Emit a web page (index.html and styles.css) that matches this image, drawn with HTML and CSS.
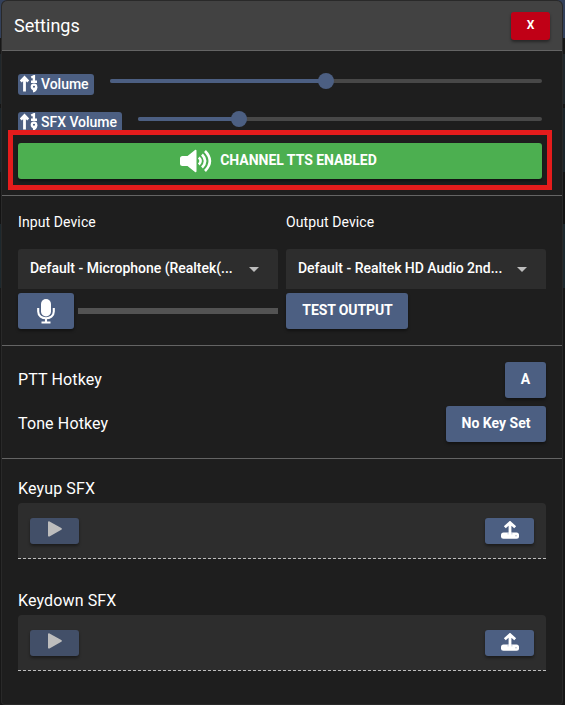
FILE: index.html
```html
<!DOCTYPE html>
<html lang="en">
<head>
<meta charset="utf-8">
<title>Settings</title>
<link rel="stylesheet" href="styles.css">
</head>
<body>
<svg class="defs" aria-hidden="true">
  <symbol id="levels" viewBox="0 0 18 18">
    <path d="M4.500 16.500V3M.8 6.500 4.500 2.500 8.200 6.500" fill="none" stroke="#fff" stroke-width="2.800"/>
    <path d="M11.200 2.500 13.900 1.300V6.500M11 6.800h6" fill="none" stroke="#fff" stroke-width="2.400"/>
    <circle cx="14" cy="11.800" r="2.200" fill="none" stroke="#fff" stroke-width="2.300"/>
    <path d="M16.200 12c0 2.400-1.200 3.900-3.200 4.500" fill="none" stroke="#fff" stroke-width="2.300"/>
  </symbol>
  <symbol id="play" viewBox="0 0 14 16">
    <path d="M0 1.200C0 .3.8-.1 1.500.4L13.300 7.100c.7.4.7 1.200 0 1.600L1.500 15.500C.8 15.900 0 15.500 0 14.800Z" fill="#bdbdbd"/>
  </symbol>
  <symbol id="upload" viewBox="0 0 18 18">
    <rect x="0" y="11.500" width="18" height="6.300" rx="2.500" fill="#fff"/>
    <path d="M7.200 13.500V11M10.800 13.500V11" stroke="#8fa0bd" stroke-width=".7"/>
    <path d="M9 14V2M3.800 6.300 9 1.600l5.200 4.700" fill="none" stroke="#fff" stroke-width="2.800"/>
    <circle cx="15" cy="14.800" r=".5" fill="#4c5f82"/>
  </symbol>
</svg>
<div class="sliver sliver-tan"></div>
<div class="sliver sliver-red"></div>
<main class="dialog">
  <header class="header">
    <h1 class="title">Settings</h1>
    <button class="btn close">X</button>
  </header>
  <section class="section levels">
    <div class="level">
      <span class="badge"><svg><use href="#levels"/></svg><span>Volume</span></span>
      <div class="track"><div class="fill" style="width:50%"></div><div class="thumb"></div></div>
    </div>
    <div class="level">
      <span class="badge"><svg><use href="#levels"/></svg><span>SFX Volume</span></span>
      <div class="track"><div class="fill" style="width:25%"></div><div class="thumb"></div></div>
    </div>
    <div class="highlight">
      <button class="btn tts">
        <svg viewBox="0 0 32 24"><path d="M2.500 7h5L15 1c.8-.6 1.500-.2 1.500.8v20.500c0 1-.7 1.300-1.500.7L7.500 17h-5Q0 17 0 14.500v-5Q0 7 2.500 7Z" fill="#fff"/><path d="M18.800 8.500q3.600 3.500 0 7M22 5.500q6.200 6.500 0 13M25 2q9.700 10 0 20" fill="none" stroke="#fff" stroke-width="2.600"/></svg>
        CHANNEL TTS ENABLED
      </button>
    </div>
  </section>
  <section class="section devices">
    <div class="device">
      <div class="label">Input Device</div>
      <div class="select"><span>Default - Microphone (Realtek(...</span><i></i></div>
      <div class="tools">
        <button class="btn mic"><svg viewBox="0 0 18 25"><rect x="4" y="0" width="10" height="17.500" rx="5" fill="#fff"/><path d="M1.200 9v3.500c0 9 15.600 9 15.600 0V9M9 19v4.500M4.500 23.500h9" fill="none" stroke="#fff" stroke-width="2.100"/></svg></button>
        <div class="meter"></div>
      </div>
    </div>
    <div class="device">
      <div class="label">Output Device</div>
      <div class="select"><span>Default - Realtek HD Audio 2nd...</span><i></i></div>
      <div class="tools"><button class="btn test">TEST OUTPUT</button></div>
    </div>
  </section>
  <section class="section hotkeys">
    <div class="hotkey"><span>PTT Hotkey</span><button class="btn key-a">A</button></div>
    <div class="hotkey"><span>Tone Hotkey</span><button class="btn key-none">No Key Set</button></div>
  </section>
  <section class="sounds">
    <div class="sound">
      <div class="sound-name">Keyup SFX</div>
      <div class="file"><button class="btn small muted"><svg class="play"><use href="#play"/></svg></button><button class="btn small"><svg class="upload"><use href="#upload"/></svg></button></div>
    </div>
    <div class="sound">
      <div class="sound-name">Keydown SFX</div>
      <div class="file"><button class="btn small muted"><svg class="play"><use href="#play"/></svg></button><button class="btn small"><svg class="upload"><use href="#upload"/></svg></button></div>
    </div>
  </section>
</main>
</body>
</html>
```
FILE: styles.css
```css
* { box-sizing: border-box; }
body {
  margin: 0;
  width: 565px;
  height: 705px;
  padding: 1px 3px 1px 2px;
  overflow: hidden;
  background: linear-gradient(#33405a 0 38px, #171717 38px 54px, #20272b 54px 104px, #151515 104px 108px, #1b2429 108px 172px, #131313 172px 224px, #1d282d 224px 288px, #171717 288px);
  color: #fff;
  font: 400 14px/20px Roboto, sans-serif;
}
svg { display: block; flex: none; }
.defs { position: absolute; width: 0; height: 0; }
.sliver { position: absolute; top: 0; height: 1px; }
.sliver-tan { left: 77px; width: 8px; background: #aaa69b; }
.sliver-red { left: 498px; width: 20px; height: 2px; background: #98312f; }
.dialog {
  position: relative;
  width: 560px;
  height: 703px;
  border-radius: 5px 5px 3px 3px;
  overflow: hidden;
  background: #1e1e1e;
  box-shadow: 0 0 0 1px #292929;
}
.header {
  display: flex;
  align-items: center;
  justify-content: space-between;
  height: 50px;
  padding: 0 12px;
  background: #424242;
  border-bottom: 1px solid #646464;
}
.title { margin: 0; font-size: 18px; line-height: 24px; font-weight: 400; }
.btn {
  display: flex;
  align-items: center;
  justify-content: center;
  height: 36px;
  padding: 0;
  border: 0;
  border-radius: 3px;
  background: #4c5f82;
  color: #fff;
  font: 700 14px/20px Roboto, sans-serif;
  box-shadow: 0 2px 3px rgba(0,0,0,.4);
}
.close { width: 39px; height: 28px; background: #c00016; font-size: 12px; padding-bottom: 2px; }
.section { border-bottom: 1px solid #646464; }
.levels { height: 145px; padding: 23px 20px 0 16px; }
.level { display: flex; align-items: flex-start; gap: 16px; height: 38px; }
.badge {
  display: flex;
  align-items: center;
  gap: 3px;
  height: 21px;
  padding: 0 5px 0 2px;
  border-radius: 3px;
  background: #4c5f82;
  white-space: nowrap;
  font-weight: 500;
}
.badge svg { width: 18px; height: 18px; margin-bottom: 2px; }
.badge span { padding-bottom: 2px; letter-spacing: -.03px; }
.track { display: flex; align-items: center; flex: 1; height: 4px; margin-top: 5px; border-radius: 2px; background: #484848; }
.fill { height: 4px; border-radius: 2px; background: #4c5f82; }
.thumb { flex: none; width: 16px; height: 16px; margin-left: -8px; border-radius: 50%; background: #4c5f82; }
.highlight { position: relative; height: 60px; margin: -20px -10px 0; padding: 8px 5px; border: 5px solid #e51c1c; background: #1e1e1e; }
.tts { width: 100%; gap: 8px; padding: 0 3px 2px 0; background: #4caf50; letter-spacing: -.03px; }
.tts svg { width: 32px; height: 24px; margin-top: 2px; }
.devices { display: flex; gap: 8px; height: 150px; padding: 16px; }
.device { width: 260px; }
.label { letter-spacing: .1px; }
.select { display: flex; align-items: center; height: 40px; margin-top: 17px; padding: 0 19px 2px 12px; border-radius: 3px 3px 0 0; background: #2d2d2d; white-space: nowrap; font-weight: 500; letter-spacing: -.02px; }
.select i { margin-left: auto; border: 5px solid transparent; border-top-color: #bdbdbd; border-bottom: 0; margin-top: 2px; }
.tools { display: flex; align-items: center; gap: 4px; margin-top: 4px; }
.mic { width: 56px; }
.mic svg { width: 18px; height: 25px; }
.meter { flex: 1; height: 6px; background: #535353; }
.test { width: 122px; padding: 0 0 2px 1px; letter-spacing: -.1px; }
.hotkeys { display: flex; flex-direction: column; gap: 8px; height: 113px; padding: 16px; }
.hotkey { display: flex; align-items: center; justify-content: space-between; height: 36px; font-size: 16px; letter-spacing: .13px; }
.key-a { width: 41px; padding-bottom: 2px; }
.key-none { width: 100px; padding-bottom: 2px; }
.sounds { display: flex; flex-direction: column; gap: 32px; padding: 20px 16px; }
.sound-name { height: 24px; font-size: 16px; letter-spacing: .13px; }
.file { display: flex; align-items: center; justify-content: space-between; height: 56px; padding: 0 12px; border-radius: 4px 4px 0 0; background: #2d2d2d; border-bottom: 1px dashed #bdbdbd; }
.small { width: 49px; height: 26px; }
.muted { background: #424f68; }
.play { width: 14px; height: 16px; margin-bottom: 3px; }
.upload { width: 18px; height: 18px; margin-bottom: 2px; }
```
